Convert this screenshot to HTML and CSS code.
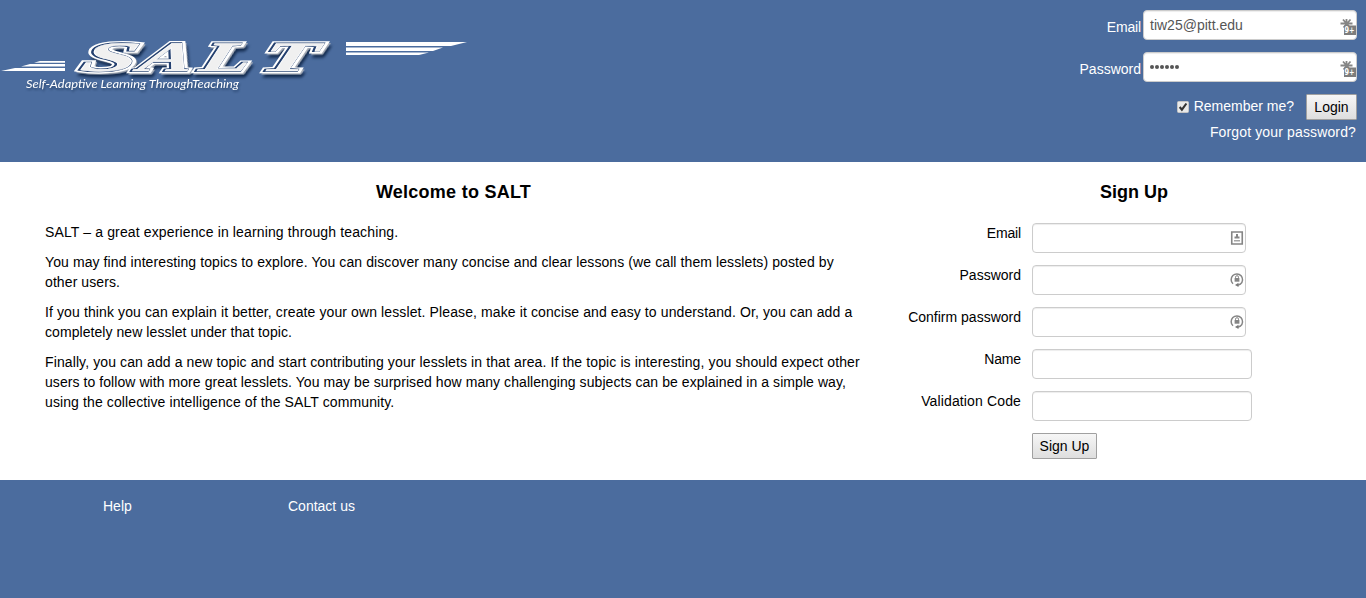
FILE: index.html
```html
<!DOCTYPE html>
<html lang="en">
<head>
<meta charset="utf-8">
<title>SALT</title>
<link rel="stylesheet" href="styles.css">
</head>
<body>
<header class="header">
  <svg class="logo" width="480" height="100" viewBox="0 0 480 100" role="img" aria-label="SALT">
    <defs>
      <g id="letters">
        <text x="81" y="71" textLength="56" lengthAdjust="spacingAndGlyphs">S</text>
        <text x="139" y="71" textLength="54" lengthAdjust="spacingAndGlyphs">A</text>
        <text x="200" y="71" textLength="50" lengthAdjust="spacingAndGlyphs">L</text>
        <text x="261" y="71" textLength="54" lengthAdjust="spacingAndGlyphs">T</text>
      </g>
    </defs>
    <g class="stripes">
      <path d="M40 61h25v1.800H34zM30 64h35v2.500H21zM15 68h50v3H1z"/>
      <path d="M346 42h121l-16 4H346zM346 47.500h97l-10 3.500h-87zM346 52.500h83l-10 2.500h-73z"/>
    </g>
    <g transform="translate(19 0) skewX(-17)">
      <g class="letters-depth"><use href="#letters" x="2" y="2"/></g>
      <use href="#letters" class="letters-edge"/>
      <use href="#letters" class="letters-line" x="-.6" y="-.4"/>
      <use href="#letters" class="letters-face" x=".7" y=".5"/>
    </g>
    <text class="tagline" x="26" y="87.500" textLength="213" lengthAdjust="spacingAndGlyphs">Self-Adaptive Learning ThroughTeaching</text>
  </svg>
  <form class="login">
    <label class="login-row"><span class="email-label">Email</span><span class="field filled"><span>tiw25@pitt.edu</span><svg class="manager" viewBox="0 0 16 18"><path d="M6.500 1v12M.5 5.500h12M3 1.500l7 8M10.500 1.500l-7 8" class="asterisk"/><rect x="4" y="7.500" width="12" height="9.500" fill="#7d7d7d"/><text x="4.500" y="15" class="badge-text" textLength="10" lengthAdjust="spacingAndGlyphs">9+</text></svg></span></label>
    <label class="login-row">Password<span class="field filled"><span class="dots"><i></i><i></i><i></i><i></i><i></i><i></i></span><svg class="manager" viewBox="0 0 16 18"><path d="M6.500 1v12M.5 5.500h12M3 1.500l7 8M10.500 1.500l-7 8" class="asterisk"/><rect x="4" y="7.500" width="12" height="9.500" fill="#7d7d7d"/><text x="4.500" y="15" class="badge-text" textLength="10" lengthAdjust="spacingAndGlyphs">9+</text></svg></span></label>
    <div class="login-actions">
      <svg class="check" viewBox="0 0 12 12"><rect x=".5" y=".5" width="11" height="11" rx="1" fill="#e9e9e9" stroke="#c4c4c4"/><path d="M2.700 6l2.200 2.700L9.400 2.500" fill="none" stroke="#333" stroke-width="2.100"/></svg>
      <span class="remember">Remember me?</span>
      <button type="button" class="button login-button">Login</button>
    </div>
    <a class="forgot">Forgot your password?</a>
  </form>
</header>
<main class="main">
  <section class="intro">
    <h1>Welcome to SALT</h1>
    <p class="loose">SALT – a great experience in learning through teaching.</p>
    <p>You may find interesting topics to explore. You can discover many concise and clear lessons (we call them lesslets) posted by<br>other users.</p>
    <p class="medium">If you think you can explain it better, create your own lesslet. Please, make it concise and easy to understand. Or, you can add a<br><span class="tight">completely new lesslet under that topic.</span></p>
    <p class="medium">Finally, you can add a new topic and start contributing your lesslets in that area. If the topic is interesting, you should expect other<br><span class="tight">users to follow with more great lesslets. You may be surprised how many challenging subjects can be explained in a simple way,</span><br>using the collective intelligence of the SALT community.</p>
  </section>
  <section class="signup">
    <h1>Sign Up</h1>
    <div class="grid">
      <label class="email-label">Email</label><span class="field"><svg class="hint" viewBox="0 0 14 14"><path d="M1.750 1h10.500v12H1.750z" fill="#fff" stroke="#858585" stroke-width="1.600"/><path d="M6 3h2v2.500h1.500v2h-5v-2H6z" fill="#858585"/><path d="M4 9h6v1.500H4z" fill="#a5a5a5"/></svg></span>
      <label>Password</label><span class="field"><svg class="hint"><use href="#generate"/></svg></span>
      <label>Confirm password</label><span class="field"><svg class="hint" viewBox="0 0 14 14"><g id="generate"><path d="M3 10.800A5.700 5.700 0 1 1 10.500 11L7.500 12.400" fill="none" stroke="#858585" stroke-width="1.500"/><path d="M8.500 9.800V14L5 12z" fill="#777"/><path d="M5.500 5V4.200a1.500 1.500 0 0 1 3 0V5" fill="none" stroke="#858585"/><path d="M4.600 5h4.800v3.700H4.600z" fill="#858585"/></g></svg></span>
      <label class="name-label">Name</label><span class="field wide"></span>
      <label class="loose">Validation Code</label><span class="field wide"></span>
      <span></span><button type="button" class="button signup-button">Sign Up</button>
    </div>
  </section>
</main>
<footer class="footer"><a>Help</a><a>Contact us</a></footer>
</body>
</html>
```
FILE: styles.css
```css
* { box-sizing: border-box; }
body { margin: 0; height: 598px; overflow: hidden; background: #4b6c9e; color: #000; font: 14px/20px "Liberation Sans", Arial, sans-serif; }
.badge-text { font: bold 8px "DejaVu Sans", sans-serif; fill: #fff; }
.asterisk { fill: none; stroke: #858585; stroke-width: 1.8; }
.header { height: 162px; display: flex; justify-content: space-between; align-items: flex-start; color: #fff; }
.logo { display: block; }
.stripes { fill: #fff; }
#letters { font: italic bold 42px "Liberation Serif", serif; }
.letters-depth { fill: #a9afb9; stroke: #a9afb9; stroke-width: 4; filter: drop-shadow(2px 3px 1.500px #142c50); }
.letters-edge { fill: #fff; stroke: #fff; stroke-width: 4.5; }
.letters-line { fill: none; stroke: #24406f; stroke-width: 1.800; }
.letters-face { fill: #f0f0f0; stroke: #fff; stroke-width: .5; }
.tagline { font: italic 11px Lato, sans-serif; fill: #fff; filter: drop-shadow(1px 2px 1px #29466f); }
.login { display: flex; flex-direction: column; align-items: flex-end; padding: 10px 9px 0 0; }
.login-row { display: flex; gap: 2px; height: 30px; margin-bottom: 12px; line-height: 34px; }
.email-label, .name-label { letter-spacing: -.15px; }
.field { display: flex; align-items: center; justify-content: flex-end; width: 214px; height: 30px; background: #fff; border: 1px solid #ccc; border-radius: 4px; box-shadow: inset 0 1px 1px rgba(0,0,0,.075); }
.wide { width: 220px; }
.filled { justify-content: space-between; padding-left: 6px; line-height: 20px; color: #555; }
.manager { width: 16px; height: 18px; margin-top: 4px; overflow: visible; }
.hint { width: 14px; height: 14px; margin-right: 1px; }
.dots { display: flex; gap: 1px; }
.dots i { width: 4px; height: 4px; border-radius: 50%; background: #555; }
.login-actions { display: flex; align-items: center; height: 26px; }
.check { width: 12px; height: 12px; margin-right: 5px; }
.remember { margin: -2px 12px 0 0; }
.button { height: 26px; padding: 0; border: 1px solid #a0a0a0; border-radius: 1px; background: linear-gradient(#f6f6f6, #dedede); color: #000; font: inherit; }
.login-button { width: 51px; }
.signup-button { width: 65px; }
.forgot { margin: 2px 1px 0 0; letter-spacing: .14px; }
.main { height: 318px; display: flex; background: #fff; padding: 20px 0 0 45px; }
.intro { width: 817px; }
h1 { margin: 0 0 20px; font-size: 18px; line-height: 20px; text-align: center; }
.intro h1 { letter-spacing: .26px; }
.intro p { margin: 0 0 10px; white-space: nowrap; letter-spacing: .095px; }
.intro .medium { letter-spacing: .11px; }
.intro .tight { letter-spacing: .065px; }
.intro .loose, .loose { letter-spacing: .135px; }
.signup { width: 399px; margin-left: 24px; }
.signup h1 { margin-left: 97px; width: 302px; margin-bottom: 21px; }
.grid { display: grid; grid-template-columns: 135px 220px; column-gap: 11px; row-gap: 12px; }
.grid label { text-align: right; }
.footer { display: flex; padding: 16px 0 0 103px; color: #fff; }
.footer a:first-child { width: 185px; }
```
